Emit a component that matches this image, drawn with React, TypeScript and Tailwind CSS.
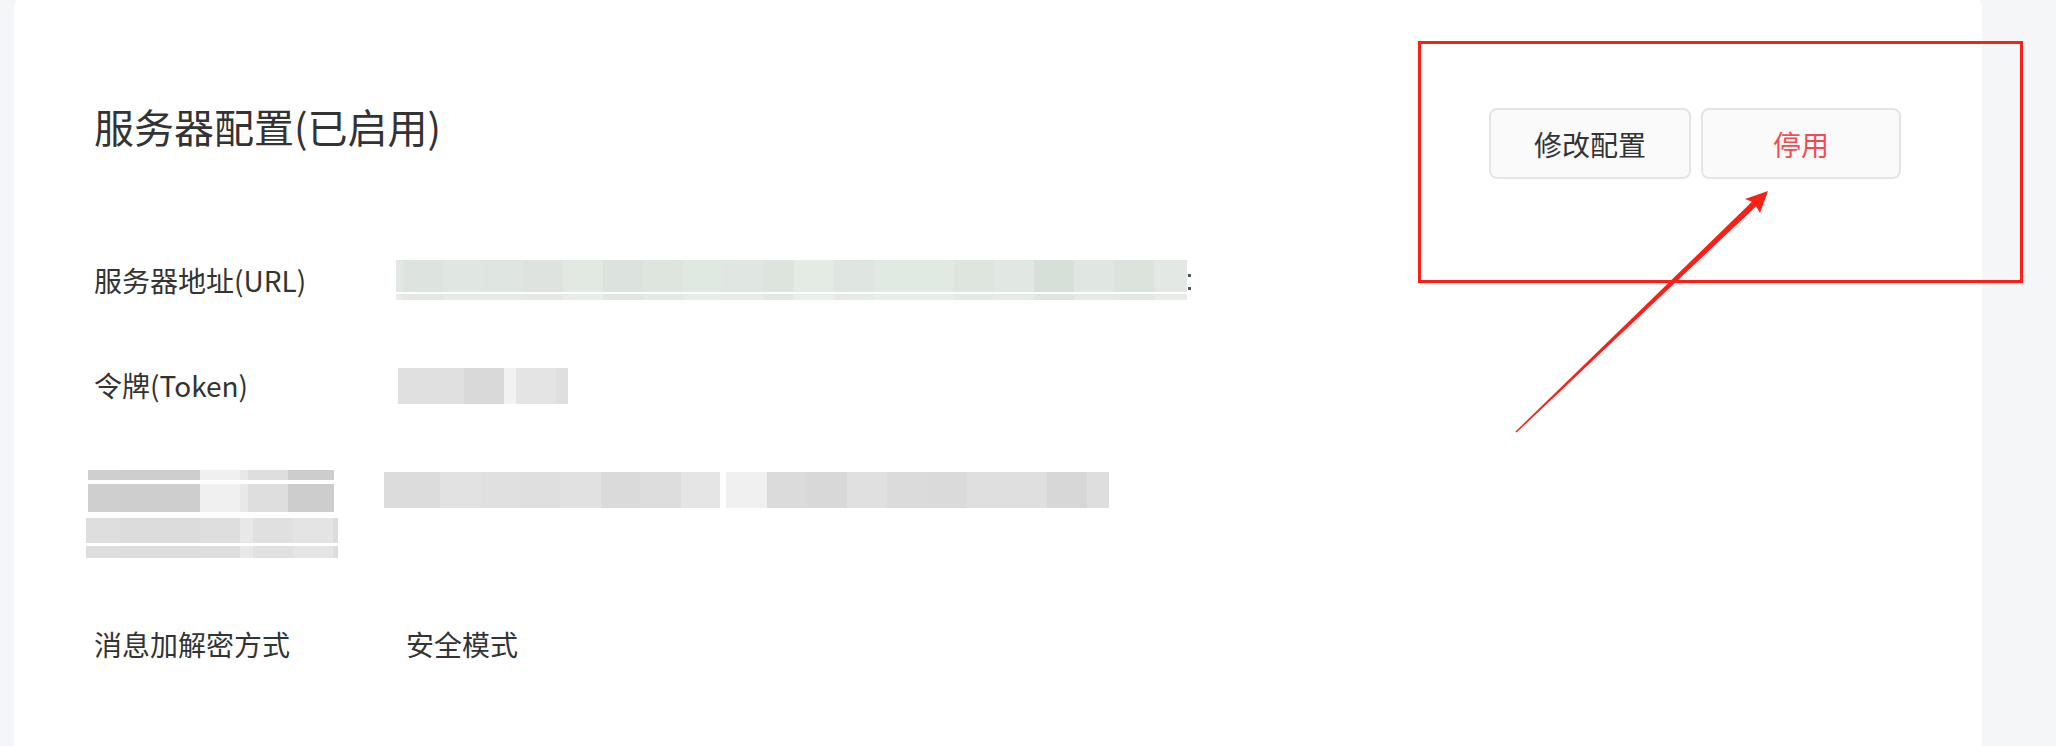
import React from "react";

type Cell = [number, string];

// blurred / pixelated bits of the screenshot, drawn as strips of grey cells
const urlCells: Cell[] = [
  [7, "#e3e8e4"], [40, "#dde3df"], [40, "#e0e6e1"], [40, "#dfe5e0"], [40, "#dfe3df"],
  [40, "#e2e9e3"], [40, "#dce2dd"], [40, "#dde5de"], [40, "#e0e8e2"], [40, "#e0e7e2"],
  [31, "#dce4dd"], [40, "#e3ebe4"], [40, "#dfe5e1"], [40, "#e1eae2"], [40, "#e1eae2"],
  [40, "#dde5de"], [40, "#e1e7e3"], [40, "#d7e0d8"], [40, "#e0e6e1"], [40, "#dbe3dc"],
  [33, "#e3e8e4"],
];

const tokenCells: Cell[] = [
  [66, "#e0e0e0"], [40, "#d9d9d9"], [12, "#f2f2f2"], [40, "#e4e4e4"], [12, "#dfdfdf"],
];

const keyCellsTop: Cell[] = [
  [32, "#cfcfcf"], [80, "#cecece"], [40, "#f0f0f0"], [8, "#e8e8e8"], [40, "#dedede"], [46, "#cdcdcd"],
];

const keyCellsBottom: Cell[] = [
  [34, "#dedede"], [40, "#dcdcdc"], [40, "#dcdcdc"], [40, "#dedede"], [13, "#e8e8e8"],
  [40, "#e0e0e0"], [40, "#e4e4e4"], [5, "#dcdcdc"],
];

const keyValueLeft: Cell[] = [
  [56, "#dcdcdc"], [41, "#e2e2e2"], [39, "#e0e0e0"], [40, "#dfdfdf"], [41, "#e1e1e1"],
  [39, "#dadada"], [41, "#dddddd"], [39, "#e5e5e5"],
];

const keyValueRight: Cell[] = [
  [41, "#f0f0f0"], [40, "#dbdbdb"], [40, "#d8d8d8"], [40, "#e0e0e0"], [40, "#dbdbdb"],
  [40, "#dadada"], [40, "#dfdfdf"], [40, "#dfdfdf"], [40, "#d7d7d7"], [22, "#dedede"],
];

function Strip({ cells, className }: { cells: Cell[]; className: string }) {
  return (
    <div className={`flex ${className}`}>
      {cells.map(([w, c], i) => (
        <div key={i} className="h-full" style={{ width: w, backgroundColor: c }} />
      ))}
    </div>
  );
}

export default function App() {
  return (
    <div
      className="relative w-full h-[746px] overflow-hidden bg-[#f5f6f8] pl-[14px] pr-[74px] text-[#333333]"
      style={{ fontFamily: '"Noto Sans CJK SC", "Noto Sans", sans-serif' }}
    >
      <div className="h-[760px] -mt-[4px] bg-white rounded-[12px] pt-[110px] pl-[80px] pr-[81px]">
        {/* header */}
        <div className="flex justify-between items-start">
          <h1 className="text-[40px] leading-[40px] font-normal">服务器配置(已启用)</h1>
          <div className="flex gap-[10px] mt-[2px]">
            <button className="w-[202px] h-[71px] border-2 border-[#e1e5ea] bg-[#fafafa] rounded-[8px] text-[28px] leading-none text-[#333333]">
              修改配置
            </button>
            <button className="w-[200px] h-[71px] border-2 border-[#e1e5ea] bg-[#fafafa] rounded-[8px] text-[28px] leading-none text-[#f14c52]">
              停用
            </button>
          </div>
        </div>

        {/* URL */}
        <div className="flex items-start mt-[81px]">
          <div className="w-[302px] mt-[6px] text-[28px] leading-[28px]">服务器地址(URL)</div>
          <div className="flex flex-col gap-[2px]">
            <Strip cells={urlCells} className="h-[32px]" />
            <Strip cells={urlCells} className="h-[6px] opacity-80" />
          </div>
          <div className="flex flex-col gap-[10px] mt-[14px] ml-[1px]">
            <div className="w-[3px] h-[3px] bg-[#555555]" />
            <div className="w-[3px] h-[3px] bg-[#555555]" />
          </div>
        </div>

        {/* Token */}
        <div className="flex items-start mt-[68px]">
          <div className="w-[304px] mt-[3px] text-[28px] leading-[28px]">令牌(Token)</div>
          <Strip cells={tokenCells} className="h-[36px]" />
        </div>

        {/* EncodingAESKey (blurred) */}
        <div className="flex items-start mt-[66px] -ml-[8px]">
          <div className="w-[298px] flex flex-col">
            <Strip cells={keyCellsTop} className="h-[10px] ml-[2px]" />
            <Strip cells={keyCellsTop} className="h-[28px] ml-[2px] mt-[4px]" />
            <Strip cells={keyCellsBottom} className="h-[25px] mt-[6px]" />
            <Strip cells={keyCellsBottom} className="h-[12px] mt-[3px]" />
          </div>
          <div className="flex gap-[6px] mt-[2px]">
            <Strip cells={keyValueLeft} className="h-[36px]" />
            <Strip cells={keyValueRight} className="h-[36px]" />
          </div>
        </div>

        {/* encryption mode */}
        <div className="flex items-start mt-[72px]">
          <div className="w-[312px] text-[28px] leading-[28px]">消息加解密方式</div>
          <div className="text-[28px] leading-[28px]">安全模式</div>
        </div>
      </div>

      {/* annotation: red box + arrow */}
      <div className="absolute left-[1418px] top-[41px] w-[605px] h-[242px] border-[3px] border-[#fb1f17] pointer-events-none" />
      <svg
        className="absolute left-0 top-0 pointer-events-none"
        width="2056"
        height="746"
        viewBox="0 0 2056 746"
      >
        <polygon
          fill="#fb1f17"
          points="1515.5,431.5 1751.9,201.8 1745,199 1768,191 1760,213 1756.1,206.2 1516.5,432.5"
        />
      </svg>
    </div>
  );
}
